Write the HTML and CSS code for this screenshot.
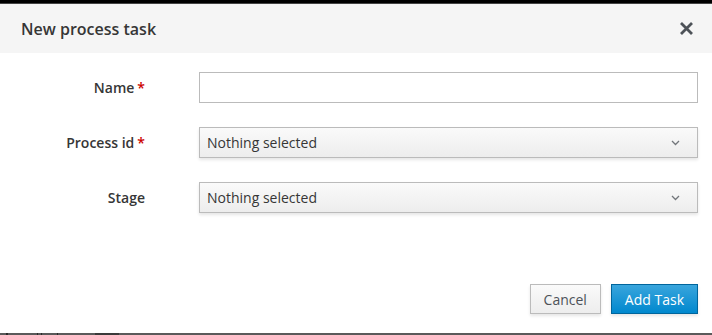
FILE: index.html
```html
<!DOCTYPE html>
<html>
<head>
    <meta charset="UTF-8">
    <title>New process task</title>
    <link rel="stylesheet" href="styles.css">
</head>
<body>
    <div class="top-edge"></div>
    <div class="modal">
        <div class="modal-header">
            <h4 class="modal-title">New process task</h4>
            <button class="close" aria-label="Close">
                <svg width="15" height="15" viewBox="0 0 15 15">
                    <path d="M2 2 L13 13 M13 2 L2 13" stroke="#4d5258" stroke-width="2.8"/>
                </svg>
            </button>
        </div>

        <form class="modal-body">
            <div class="form-row">
                <label class="form-label">Name<span class="required">*</span></label>
                <input class="form-control" type="text">
            </div>
            <div class="form-row">
                <label class="form-label">Process id<span class="required">*</span></label>
                <div class="select">
                    <span>Nothing selected</span>
                    <svg width="9" height="6" viewBox="0 0 9 6"><path d="M1 1 L4.5 4.5 L8 1" fill="none" stroke="#72767b" stroke-width="1.3"/></svg>
                </div>
            </div>
            <div class="form-row">
                <label class="form-label">Stage</label>
                <div class="select">
                    <span>Nothing selected</span>
                    <svg width="9" height="6" viewBox="0 0 9 6"><path d="M1 1 L4.5 4.5 L8 1" fill="none" stroke="#72767b" stroke-width="1.3"/></svg>
                </div>
            </div>
        </form>

        <div class="modal-footer">
            <button class="btn btn-default">Cancel</button>
            <button class="btn btn-primary">Add Task</button>
        </div>
    </div>
    <div class="bottom-edge">
        <span class="tick t1"></span>
        <span class="tick t2"></span>
        <span class="tick t3"></span>
        <span class="tick t4"></span>
        <span class="tick t5"></span>
    </div>
</body>
</html>
```

FILE: styles.css
```css
* {
    margin: 0;
    padding: 0;
    box-sizing: border-box;
}

body {
    width: 712px;
    height: 335px;
    overflow: hidden;
    background: #fff;
    font-family: 'Open Sans', 'Liberation Sans', sans-serif;
    color: #363636;
    font-size: 14px;
}

.top-edge {
    height: 4px;
    background: linear-gradient(#000 0, #000 3px, #444 3px);
}

.modal {
    height: 329px;
    display: flex;
    flex-direction: column;
}

/* Header */
.modal-header {
    height: 49px;
    display: flex;
    align-items: center;
    justify-content: space-between;
    padding: 0 18px 0 21px;
    background: #f5f5f5;
}

.modal-title {
    font-size: 16px;
    font-weight: 600;
    color: #363636;
}

.close {
    display: flex;
    border: none;
    background: none;
    cursor: pointer;
}

/* Body */
.modal-body {
    display: flex;
    flex-direction: column;
    gap: 24px;
    padding: 19px 14px 0 0;
}

.form-row {
    display: grid;
    grid-template-columns: 145px 1fr;
    column-gap: 54px;
    align-items: center;
}

.form-label {
    text-align: right;
    font-weight: 600;
    font-size: 14px;
    color: #363636;
}

.required {
    color: #c00;
    margin-left: 3px;
}

.form-control {
    height: 31px;
    border: 1px solid #bbb;
    background: #fff;
    font: inherit;
    padding: 0 8px;
}

.select {
    height: 31px;
    display: flex;
    align-items: center;
    justify-content: space-between;
    padding: 0 17px 0 7px;
    border: 1px solid #bbb;
    background: linear-gradient(#fafafa, #ededed);
    box-shadow: 0 2px 3px rgba(3, 3, 3, 0.1);
    font-size: 14px;
    color: #363636;
}

/* Footer */
.modal-footer {
    margin-top: auto;
    display: flex;
    justify-content: flex-end;
    gap: 10px;
    padding: 0 14px 19px 0;
}

.btn {
    height: 30px;
    padding: 0 13px;
    font-family: inherit;
    font-size: 14px;
    border: 1px solid;
    box-shadow: 0 2px 3px rgba(3, 3, 3, 0.1);
}

.btn-default {
    color: #4d5258;
    background: linear-gradient(#fafafa, #ededed);
    border-color: #bbb;
}

.btn-primary {
    color: #fff;
    background: linear-gradient(#39a5dc, #0088ce);
    border-color: #00659c;
}

.bottom-edge {
    position: relative;
    height: 2px;
    background: #5a5a5a;
}

.tick {
    position: absolute;
    top: 0;
    height: 2px;
    background: #2a2a2a;
}

.t1 { left: 6px; width: 2px; }
.t2 { left: 37px; width: 1px; }
.t3 { left: 41px; width: 1px; }
.t4 { left: 57px; width: 1px; }
.t5 { left: 95px; width: 24px; background: #3a3a3a; }
```
